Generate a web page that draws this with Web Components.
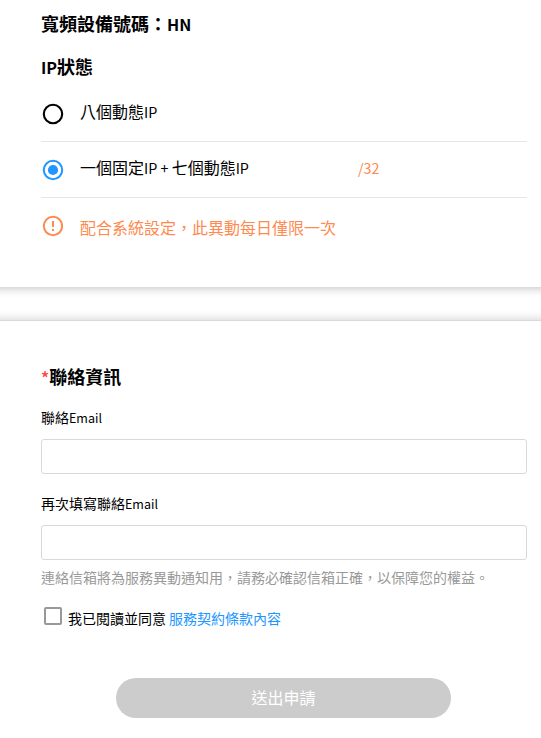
<!DOCTYPE html>
<html lang="zh-Hant">
<head>
<meta charset="utf-8">
<title>IP狀態</title>
<style>
  body {
    margin: 0;
    background: #fff;
    color: #000;
    font-family: "Noto Sans CJK TC", sans-serif;
    font-size: 16px;
    line-height: 24px;
  }
</style>
</head>
<body>
<ip-request-page></ip-request-page>

<script>
class UiIcon extends HTMLElement {
  constructor() {
    super();
    this.attachShadow({ mode: 'open' });
  }

  connectedCallback() {
    const shapes = {
      'radio-off': '<circle cx="12" cy="12" r="9.2" fill="none" stroke="currentColor" stroke-width="2.1"/>',
      'radio-on': '<circle cx="12" cy="12" r="9.2" fill="none" stroke="currentColor" stroke-width="2"/><circle cx="12" cy="12" r="5.1" fill="currentColor"/>',
      'alert': '<circle cx="12" cy="12" r="9.2" fill="none" stroke="currentColor" stroke-width="2"/><path d="M11 7h2v6h-2zM11 15h2v2h-2z" fill="currentColor"/>',
      'checkbox': '<rect x="4" y="4" width="16" height="16" rx="1" fill="none" stroke="currentColor" stroke-width="2"/>',
    };

    this.shadowRoot.innerHTML = `
      <style>
        :host {
          display: block;
          flex: none;
          width: 24px;
          height: 24px;
        }

        svg {
          display: block;
        }
      </style>
      <svg width="24" height="24" viewBox="0 0 24 24">${shapes[this.getAttribute('name')]}</svg>
    `;
  }
}

class SectionTitle extends HTMLElement {
  constructor() {
    super();
    this.attachShadow({ mode: 'open' });
    this.shadowRoot.innerHTML = `
      <style>
        :host {
          display: block;
        }

        h2 {
          margin: 0;
          font-size: 18px;
          line-height: 26px;
          font-weight: 700;
        }

        span {
          font-size: 0.895em;
          line-height: 0;
          color: #ff4d4d;
        }
      </style>
      <h2>${this.hasAttribute('required') ? '<span>*</span>' : ''}<slot></slot></h2>
    `;
  }
}

class OptionRow extends HTMLElement {
  constructor() {
    super();
    this.attachShadow({ mode: 'open' });
  }

  connectedCallback() {
    const icon = this.getAttribute('icon');

    this.shadowRoot.innerHTML = `
      <style>
        :host {
          display: flex;
          box-sizing: border-box;
          height: 56px;
          padding-top: 13px;
          border-bottom: 1px solid #e6e6e6;
        }

        :host([icon="alert"]) {
          border-bottom: 0;
          padding-top: 17px;
          color: #ff8a50;
        }

        ui-icon {
          margin: 3px 15.5px 0 -0.5px;
        }

        :host([icon="radio-on"]) ui-icon {
          margin: 3px 15px 0 0;
          color: #2196ff;
        }

        :host([icon="alert"]) ui-icon {
          margin-top: -1px;
        }

        .label {
          width: 278px;
        }

        ::slotted([slot="value"]) {
          color: #ff8a50;
        }
      </style>
      <ui-icon name="${icon}"></ui-icon>
      <div class="label"><slot></slot></div>
      <slot name="value"></slot>
    `;
  }
}

class TextField extends HTMLElement {
  constructor() {
    super();
    this.attachShadow({ mode: 'open' });
    this.shadowRoot.innerHTML = `
      <style>
        :host {
          display: block;
          font-size: 14px;
          line-height: 20px;
        }

        label {
          display: block;
          margin-bottom: 12px;
        }

        input {
          display: block;
          box-sizing: border-box;
          width: 100%;
          height: 35px;
          padding: 0 10px;
          border: 1px solid #d9d9d9;
          border-radius: 3px;
          background: #fff;
          font: inherit;
          outline: none;
        }
      </style>
      <label for="field"><slot></slot></label>
      <input id="field" type="text">
    `;
  }
}

class SubmitButton extends HTMLElement {
  constructor() {
    super();
    this.attachShadow({ mode: 'open' });
    this.shadowRoot.innerHTML = `
      <style>
        :host {
          display: block;
          width: 335px;
        }

        button {
          display: block;
          width: 100%;
          height: 40px;
          padding: 0 0 2px;
          border: 0;
          border-radius: 20px;
          background: #ccc;
          color: #fff;
          font: inherit;
        }
      </style>
      <button disabled><slot></slot></button>
    `;
  }
}

class IpRequestPage extends HTMLElement {
  constructor() {
    super();
    this.attachShadow({ mode: 'open' });
    this.shadowRoot.innerHTML = `
      <style>
        :host {
          display: flex;
          flex-direction: column;
          gap: 33px;
          height: 738px;
          overflow: hidden;
        }

        section {
          box-sizing: border-box;
          margin: 0 -12px;
          padding: 0 26px 0 53px;
          box-shadow: 0 0 10px rgba(0, 0, 0, 0.3);
        }

        /* latin text sits a little smaller than the han glyphs */
        small {
          font-size: 0.895em;
          line-height: 0;
          white-space: pre;
        }

        .status {
          height: 287px;
          padding-top: 10px;
        }

        .status section-title {
          margin-bottom: 17px;
        }

        .status section-title + section-title {
          margin-bottom: 7px;
        }

        .contact {
          flex: 1;
          padding-top: 42px;
          border-top: 1px solid #d9d9d9;
          box-shadow: 0 0 10px rgba(0, 0, 0, 0.2);
        }

        .contact section-title {
          margin-bottom: 18px;
        }

        text-field + text-field {
          margin-top: 19px;
        }

        .hint {
          margin: 7px 0 0;
          font-size: 14px;
          line-height: 20px;
          color: #999;
        }

        .agree {
          display: flex;
          align-items: center;
          height: 24px;
          margin: 17px 0 50px;
          font-size: 14px;
        }

        .agree ui-icon {
          margin: 0 3.5px 0 -0.5px;
          color: #999;
        }

        .agree span,
        .agree a {
          padding-top: 3px;
        }

        .agree a {
          margin-left: 3px;
          color: #2196ff;
          text-decoration: none;
        }

        submit-button {
          margin-left: 75px;
        }
      </style>

      <section class="status">
        <section-title>寬頻設備號碼：<small>HN</small></section-title>
        <section-title><small>IP</small>狀態</section-title>
        <option-row icon="radio-off">八個動態<small>IP</small></option-row>
        <option-row icon="radio-on">一個固定<small>IP + </small>七個動態<small>IP</small><span slot="value"><small>/32</small></span></option-row>
        <option-row icon="alert">配合系統設定，此異動每日僅限一次</option-row>
      </section>

      <section class="contact">
        <section-title required>聯絡資訊</section-title>
        <text-field>聯絡<small>Email</small></text-field>
        <text-field>再次填寫聯絡<small>Email</small></text-field>
        <p class="hint">連絡信箱將為服務異動通知用，請務必確認信箱正確，以保障您的權益。</p>
        <div class="agree">
          <ui-icon name="checkbox"></ui-icon>
          <span>我已閱讀並同意</span>
          <a href="#">服務契約條款內容</a>
        </div>
        <submit-button>送出申請</submit-button>
      </section>
    `;
  }
}

customElements.define('ui-icon', UiIcon);
customElements.define('section-title', SectionTitle);
customElements.define('option-row', OptionRow);
customElements.define('text-field', TextField);
customElements.define('submit-button', SubmitButton);
customElements.define('ip-request-page', IpRequestPage);
</script>
</body>
</html>
